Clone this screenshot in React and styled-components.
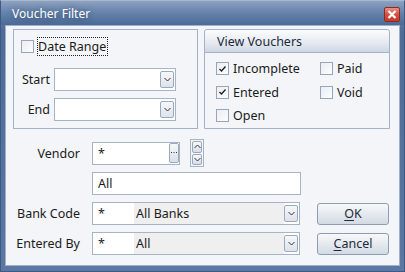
import React from 'react'
import styled, { createGlobalStyle } from 'styled-components'

const Global = createGlobalStyle`
	html, body { margin: 0; padding: 0; background: #ffffff; }
	body { font-family: "Noto Sans", "Open Sans", sans-serif; font-size: 12px; color: #1b1b1b; }
`

const Window = styled.div`
	width: 405px;
	height: 272px;
	box-sizing: border-box;
	display: flex;
	flex-direction: column;
	background: linear-gradient(#8397b6, #4d6c98 30px, #5a78a3);
	border: 1px solid #3e5a82;
	border-top-color: #a7b8cf;
`
const TitleBar = styled.div`
	height: 24px;
	display: flex;
	align-items: center;
	justify-content: space-between;
	padding: 0 4px 0 11px;
	background: linear-gradient(#8ea2c0, #6482ab 50%, #4b6a96);
`
const Title = styled.div`
	color: #ffffff;
	font-size: 12px;
	text-shadow: 0 0 6px rgba(20, 40, 70, 0.6);
	margin-top: 1px;
`
const CloseButton = styled.div`
	width: 16px;
	height: 15px;
	margin-top: 3px;
	box-sizing: border-box;
	border: 1px solid #8a2c22;
	border-radius: 2px;
	background: linear-gradient(#eb8f84, #d4503f 50%, #c23b2c);
	display: flex;
	align-items: center;
	justify-content: center;
`
const Client = styled.div`
	flex: 1;
	margin: 0 4px 5px 4px;
	background: #f3f5f8;
	border: 1px solid #9fb0c7;
	padding: 3px 0 0 7px;
	box-sizing: border-box;
`
const TopRow = styled.div`
	display: grid;
	grid-template-columns: 185px 186px;
	column-gap: 6px;
	height: 100px;
`
const GroupBox = styled.div`
	border: 1px solid #a3b2c8;
	box-sizing: border-box;
	border-radius: ${p => (p.$rounded ? '3px 3px 0 0' : '0')};
	background: #f3f5f8;
`
const DateHeader = styled.div`
	display: flex;
	align-items: center;
	margin: 7px 0 0 7px;
	height: 19px;
`
const FocusLabel = styled.span`
	border: 1px dotted #222;
	margin-left: 3px;
	height: 17px;
	line-height: 17px;
	padding: 0 1px 0 0;
	white-space: nowrap;
	font-size: 12.5px;
`
const FieldRow = styled.div`
	display: flex;
	align-items: center;
	margin-top: ${p => p.$top || 0}px;
`
const SmallLabel = styled.div`
	width: 36px;
	text-align: right;
	padding-right: 4px;
	font-size: 12.5px;
`
const Combo = styled.div`
	width: ${p => p.$w}px;
	height: 23px;
	box-sizing: border-box;
	border: 1px solid #a6b4c8;
	background: #ffffff;
	display: flex;
	align-items: stretch;
`
const ComboCode = styled.div`
	width: 36px;
	padding-left: 5px;
	background: #ffffff;
	display: flex;
	align-items: center;
	font-size: 12.5px;
`
const ComboValue = styled.div`
	flex: 1;
	background: ${p => (p.$grey ? '#efefef' : '#ffffff')};
	display: flex;
	align-items: center;
	padding-left: 2px;
	font-size: 12.5px;
`
const DropButton = styled.div`
	width: 14px;
	height: 17px;
	margin: 2px 1px 2px 0;
	align-self: center;
	box-sizing: border-box;
	border: 1px solid #9aa9bd;
	border-radius: 2px;
	background: linear-gradient(#f6f7f9, #dde3eb);
	display: flex;
	align-items: center;
	justify-content: center;
`
const ViewHeader = styled.div`
	height: 23px;
	box-sizing: border-box;
	border-bottom: 1px solid #a3b2c8;
	background: linear-gradient(#fbfcfd, #e4e9f0 60%, #cdd6e3);
	padding-left: 12px;
	display: flex;
	align-items: center;
	font-size: 12.5px;
	color: #1e2a3a;
	border-radius: 3px 3px 0 0;
`
const CheckGrid = styled.div`
	display: grid;
	grid-template-columns: 104px auto;
	grid-auto-rows: 23.5px;
	padding: 4px 0 0 11px;
`
const CheckItem = styled.label`
	display: flex;
	align-items: center;
	font-size: 12.5px;
	gap: 4px;
`
const Box = styled.span`
	width: 13px;
	height: 13px;
	box-sizing: border-box;
	border: 1px solid #95a5ba;
	background: linear-gradient(135deg, #eaedf2, #fcfdfe);
	display: inline-flex;
	align-items: center;
	justify-content: center;
	flex: none;
`
const Bottom = styled.div`
	display: flex;
	flex-direction: column;
	margin-top: 10px;
`
const Row = styled.div`
	display: flex;
	align-items: center;
	margin-top: ${p => p.$top || 0}px;
`
const FormLabel = styled.div`
	width: 67px;
	text-align: right;
	padding-right: 12px;
	font-size: 12.5px;
	white-space: nowrap;
`
const TextInput = styled.div`
	width: ${p => p.$w}px;
	height: 23px;
	box-sizing: border-box;
	border: 1px solid #a6b4c8;
	background: #ffffff;
	display: flex;
	align-items: center;
	padding-left: 5px;
	font-size: 12.5px;
	margin-left: ${p => p.$indent || 0}px;
`
const Ellipsis = styled.div`
	margin: 0 0 0 auto;
	width: 10px;
	height: 20px;
	box-sizing: border-box;
	border: 1px solid #9aa9bd;
	border-radius: 2px;
	background: linear-gradient(#f6f7f9, #d8dfe8);
	display: flex;
	align-items: center;
	justify-content: center;
`
const Spinner = styled.div`
	margin-left: 10px;
	width: 14px;
	height: 28px;
	box-sizing: border-box;
	border: 1px solid #a6b4c8;
	padding: 1px;
	display: flex;
	flex-direction: column;
	gap: 1px;
`
const SpinButton = styled.div`
	flex: 1;
	border: 1px solid #9aa9bd;
	border-radius: 2px;
	background: linear-gradient(#f6f7f9, #d8dfe8);
	display: flex;
	align-items: center;
	justify-content: center;
`
const PushButton = styled.div`
	margin-left: 17px;
	width: 72px;
	height: 22px;
	box-sizing: border-box;
	border: 1px solid #8d9db4;
	border-radius: 3px;
	background: linear-gradient(#f7f8fa, #e5e9ef 50%, #d3dae4);
	display: flex;
	align-items: center;
	justify-content: center;
	font-size: 12.5px;
	color: #1e2a3a;
	u { text-decoration: underline; text-underline-offset: 2px; }
`

const Chevron = ({ up }) => (
	<svg width="7" height="5" viewBox="0 0 7 5">
		<path d={up ? 'M0.5 4 L3.5 1 L6.5 4' : 'M0.5 1 L3.5 4 L6.5 1'} fill="none" stroke="#333" strokeWidth="1" />
	</svg>
)

const Dots = () => (
	<svg width="6" height="2" viewBox="0 0 6 2">
		<rect x="0" y="0" width="1" height="1" fill="#333" />
		<rect x="2.5" y="0" width="1" height="1" fill="#333" />
		<rect x="5" y="0" width="1" height="1" fill="#333" />
	</svg>
)

const Check = ({ checked }) => (
	<Box>
		{checked && (
			<svg width="9" height="8" viewBox="0 0 9 8">
				<path d="M1.5 4 L3.5 6 L7.5 1.5" fill="none" stroke="#1c1c1c" strokeWidth="1.3" />
			</svg>
		)}
	</Box>
)

const Dropdown = ({ w, code, value }) => (
	<Combo $w={w}>
		{code !== undefined && <ComboCode>{code}</ComboCode>}
		<ComboValue $grey={code !== undefined}>{value}</ComboValue>
		<DropButton><Chevron /></DropButton>
	</Combo>
)

export default function App() {
	return (
		<>
			<Global />
			<Window>
				<TitleBar>
					<Title>Voucher Filter</Title>
					<CloseButton>
						<svg width="10" height="9" viewBox="0 0 10 9">
							<path d="M1.5 1 L8.5 8 M8.5 1 L1.5 8" stroke="#ffffff" strokeWidth="2.2" />
						</svg>
					</CloseButton>
				</TitleBar>
				<Client>
					<TopRow>
						<GroupBox>
							<DateHeader>
								<Check />
								<FocusLabel>Date Range</FocusLabel>
							</DateHeader>
							<FieldRow $top={12}>
								<SmallLabel>Start</SmallLabel>
								<Dropdown w={122} value="" />
							</FieldRow>
							<FieldRow $top={7}>
								<SmallLabel>End</SmallLabel>
								<Dropdown w={122} value="" />
							</FieldRow>
						</GroupBox>
						<GroupBox $rounded>
							<ViewHeader>View Vouchers</ViewHeader>
							<CheckGrid>
								<CheckItem><Check checked />Incomplete</CheckItem>
								<CheckItem><Check />Paid</CheckItem>
								<CheckItem><Check checked />Entered</CheckItem>
								<CheckItem><Check />Void</CheckItem>
								<CheckItem><Check />Open</CheckItem>
							</CheckGrid>
						</GroupBox>
					</TopRow>
					<Bottom>
						<Row>
							<FormLabel>Vendor</FormLabel>
							<TextInput $w={88}>*<Ellipsis><Dots /></Ellipsis></TextInput>
							<Spinner>
								<SpinButton><Chevron up /></SpinButton>
								<SpinButton><Chevron /></SpinButton>
							</Spinner>
						</Row>
						<Row $top={5}>
							<TextInput $w={209} $indent={79}>All</TextInput>
						</Row>
						<Row $top={7}>
							<FormLabel>Bank Code</FormLabel>
							<Dropdown w={208} code="*" value="All Banks" />
							<PushButton><span><u>O</u>K</span></PushButton>
						</Row>
						<Row $top={7}>
							<FormLabel>Entered By</FormLabel>
							<Dropdown w={208} code="*" value="All" />
							<PushButton><span><u>C</u>ancel</span></PushButton>
						</Row>
					</Bottom>
				</Client>
			</Window>
		</>
	)
}
